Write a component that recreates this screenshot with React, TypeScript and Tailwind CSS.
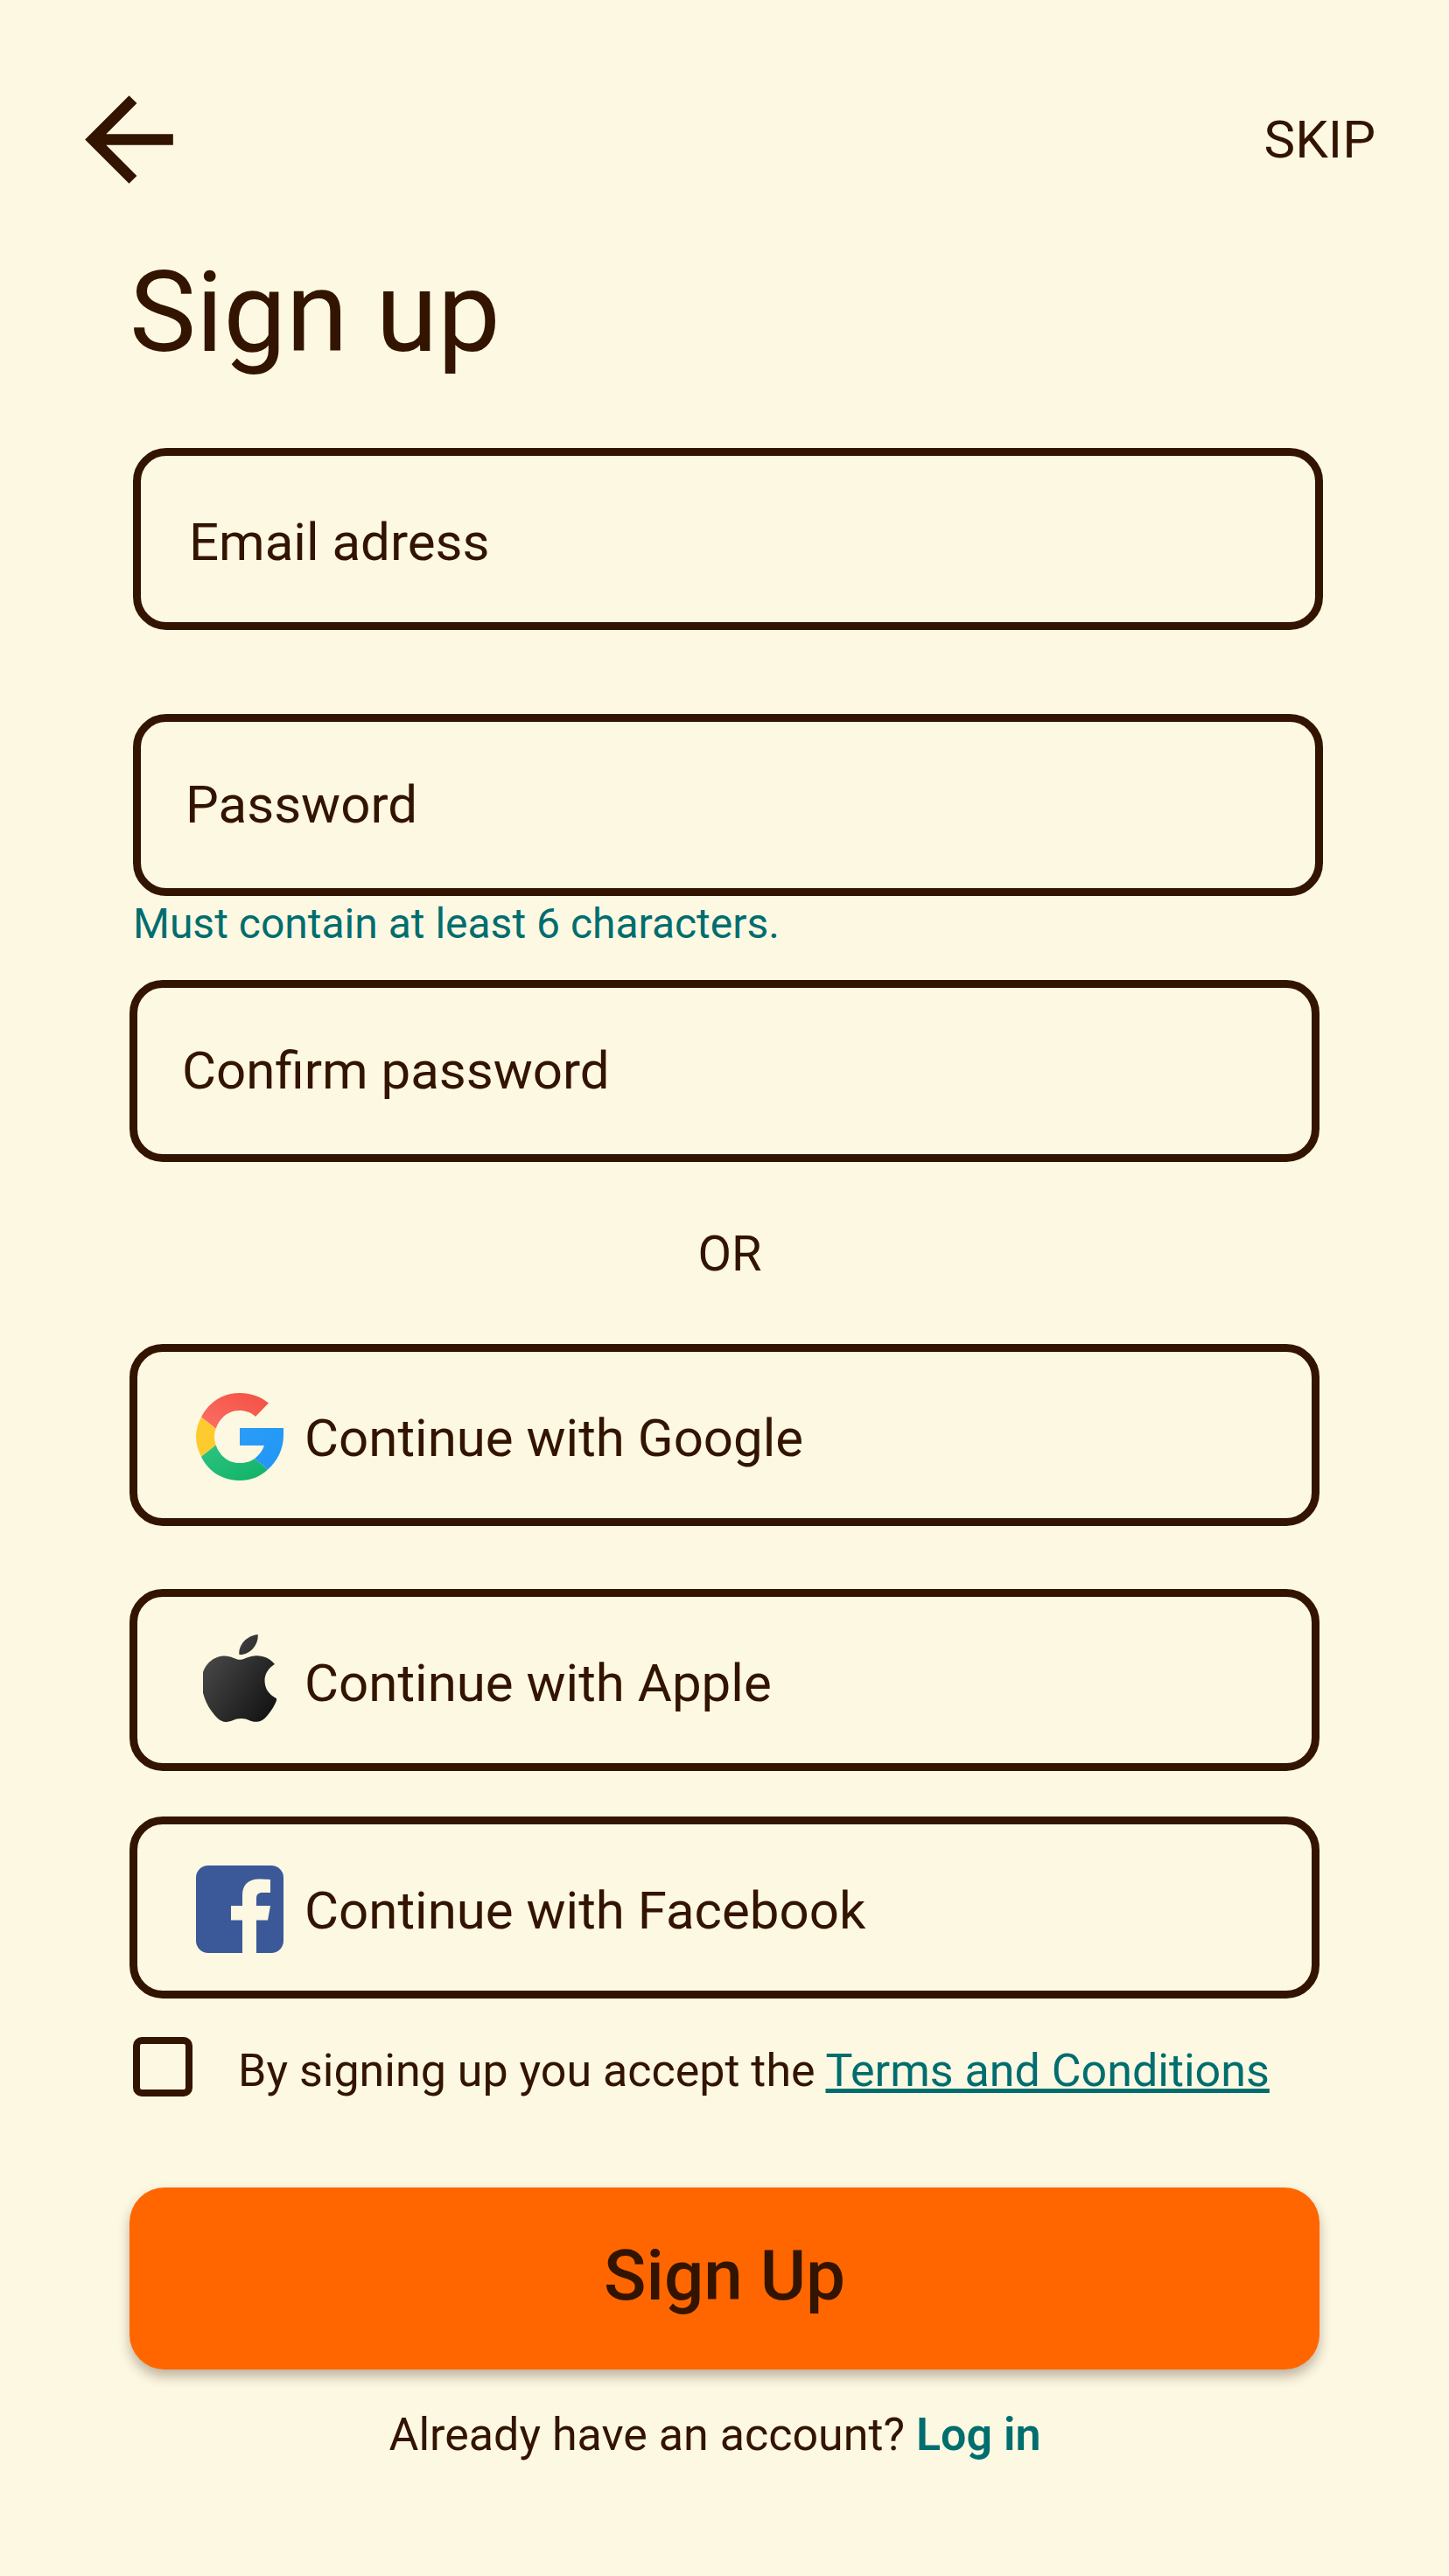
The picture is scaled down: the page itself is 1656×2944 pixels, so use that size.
const outline = 'border-[9px] border-[#331400] rounded-[38px] h-[208px] w-[1360px] flex items-center';

function BackArrow() {
  return (
    <svg viewBox="0 0 24 24" className="w-[151px] h-[151px]" fill="#331400">
      <path d="M20 11H7.83l5.59-5.59L12 4l-8 8 8 8 1.41-1.41L7.83 13H20v-2z" />
    </svg>
  );
}

function GoogleIcon() {
  return (
    <svg viewBox="0 0 100 100" className="w-[100px] h-[100px] mt-[4px]">
      <defs>
        <linearGradient id="gRed" x1="0" y1="1" x2="1" y2="0">
          <stop offset="0" stopColor="#fb6f66" />
          <stop offset="1" stopColor="#f44f42" />
        </linearGradient>
        <linearGradient id="gGreen" x1="0" y1="0" x2="1" y2="1">
          <stop offset="0" stopColor="#2fc482" />
          <stop offset="1" stopColor="#0fb167" />
        </linearGradient>
        <linearGradient id="gBlue" x1="0" y1="0" x2="1" y2="1">
          <stop offset="0" stopColor="#2b9cf8" />
          <stop offset="1" stopColor="#1f96f3" />
        </linearGradient>
      </defs>
      <path fill="url(#gRed)" d="M6 27.6C15 10 31 0 50 0 C62 0 74 4 83 11.6 L68 27 C63 22 56 20 50 20 C37 20 27 28 22.7 40.7 Z" />
      <path fill="#fecb2e" d="M6 27.6 L22.7 40.7 C20.5 46 20.5 54 22.7 59.5 L6 72.7 C-2 58 -2 42 6 27.6 Z" />
      <path fill="url(#gGreen)" d="M6 72.7 L22.7 59.5 C27 72 37 80 50 80 C57 80 63 78 67 75 L82 87.5 C73 96 62 100 50 100 C31 100 14 90 6 72.7 Z" />
      <path fill="url(#gBlue)" d="M50 40 H100 V48 C100 64 93 78 82 87.5 L67 75 C72 71 76 66 78 60 H50 Z" />
    </svg>
  );
}

function AppleIcon() {
  return (
    <svg viewBox="2.6 0 19 24" preserveAspectRatio="none" className="w-[84px] h-[100px] mb-[4px]">
      <defs>
        <linearGradient id="appleFill" x1="0" y1="0.2" x2="1" y2="1">
          <stop offset="0" stopColor="#4c4c4c" />
          <stop offset="1" stopColor="#0e0e0e" />
        </linearGradient>
      </defs>
      <path
        fill="url(#appleFill)"
        d="M12.152 6.896c-.948 0-2.415-1.078-3.96-1.04-2.04.027-3.91 1.183-4.961 3.014-2.117 3.675-.546 9.103 1.519 12.09 1.013 1.454 2.208 3.09 3.792 3.039 1.52-.065 2.09-.987 3.935-.987 1.831 0 2.35.987 3.96.948 1.637-.026 2.676-1.48 3.676-2.948 1.156-1.688 1.636-3.325 1.662-3.415-.039-.013-3.182-1.221-3.22-4.857-.026-3.04 2.48-4.494 2.597-4.559-1.429-2.09-3.623-2.324-4.39-2.376-2-.156-3.675 1.09-4.61 1.09zM15.53 3.83c.843-1.012 1.4-2.427 1.245-3.83-1.207.052-2.662.805-3.532 1.818-.78.896-1.454 2.338-1.273 3.714 1.338.104 2.715-.688 3.559-1.701"
      />
    </svg>
  );
}

function FacebookIcon() {
  return (
    <svg viewBox="0 0 100 100" className="w-[100px] h-[100px] mt-[4px]">
      <rect width="100" height="100" rx="14" fill="#3b5998" />
      <path
        fill="#fdf8e2"
        d="M53 100 V62.5 H40 V46 H53 V34 C53 22 60 15.5 72 15.5 C77 15.5 83 16 85 16 V31 H76 C71 31 69 33 69 38 V46 H85 L82 62.5 H69 V100 Z"
      />
    </svg>
  );
}

function SocialButton({ icon, label, className }: { icon: React.ReactNode; label: string; className: string }) {
  return (
    <div className={`${outline} ml-[148px] pl-[67px] ${className}`}>
      <div className="w-[100px] shrink-0 flex justify-center">{icon}</div>
      <span className="ml-[24px] pt-[7px] text-[60px] leading-[70px]">{label}</span>
    </div>
  );
}

export default function App() {
  return (
    <div className="w-[1656px] h-[2944px] bg-[#fdf8e2] text-[#331400] font-['Roboto',sans-serif] flex flex-col overflow-hidden">
      <div className="flex items-center justify-between pl-[72px] pr-[84px] pt-[84px]">
        <BackArrow />
        <span className="text-[60px] leading-[70px]">SKIP</span>
      </div>

      <h1 className="text-[128px] leading-[150px] ml-[148px] mt-[47px]">Sign up</h1>

      <div className={`${outline} ml-[152px] mt-[80px] pl-[55px]`}>
        <span className="pt-[8px] text-[60px] leading-[70px]">Email adress</span>
      </div>

      <div className={`${outline} ml-[152px] mt-[96px] pl-[51px]`}>
        <span className="text-[60px] leading-[70px]">Password</span>
      </div>

      <p className="text-[48px] leading-[56px] text-[#006d6f] ml-[152px] mt-[4px]">Must contain at least 6 characters.</p>

      <div className={`${outline} ml-[148px] mt-[36px] pl-[51px]`}>
        <span className="text-[60px] leading-[70px]">Confirm password</span>
      </div>

      <p className="text-[56px] leading-[64px] text-center w-[1668px] mt-[73px]">OR</p>

      <SocialButton className="mt-[71px]" icon={<GoogleIcon />} label="Continue with Google" />
      <SocialButton className="mt-[72px]" icon={<AppleIcon />} label="Continue with Apple" />
      <SocialButton className="mt-[52px]" icon={<FacebookIcon />} label="Continue with Facebook" />

      <div className="flex items-start ml-[152px] mt-[44px]">
        <div className="w-[68px] h-[68px] border-[8px] border-[#331400] rounded-[10px]" />
        <p className="text-[52px] leading-[64px] ml-[52px] pt-[7px]">
          By signing up you accept the{' '}
          <span className="text-[#006d6f] underline">Terms and Conditions</span>
        </p>
      </div>

      <button className="ml-[148px] mt-[101px] pb-[6px] w-[1360px] h-[208px] bg-[#ff6600] rounded-[40px] text-[80px] font-medium shadow-[0_8px_14px_rgba(51,20,0,0.3)]">
        Sign Up
      </button>

      <p className="text-[52px] leading-[64px] text-center w-[1634px] mt-[43px]">
        Already have an account? <span className="text-[#006d6f] font-semibold">Log in</span>
      </p>
    </div>
  );
}
